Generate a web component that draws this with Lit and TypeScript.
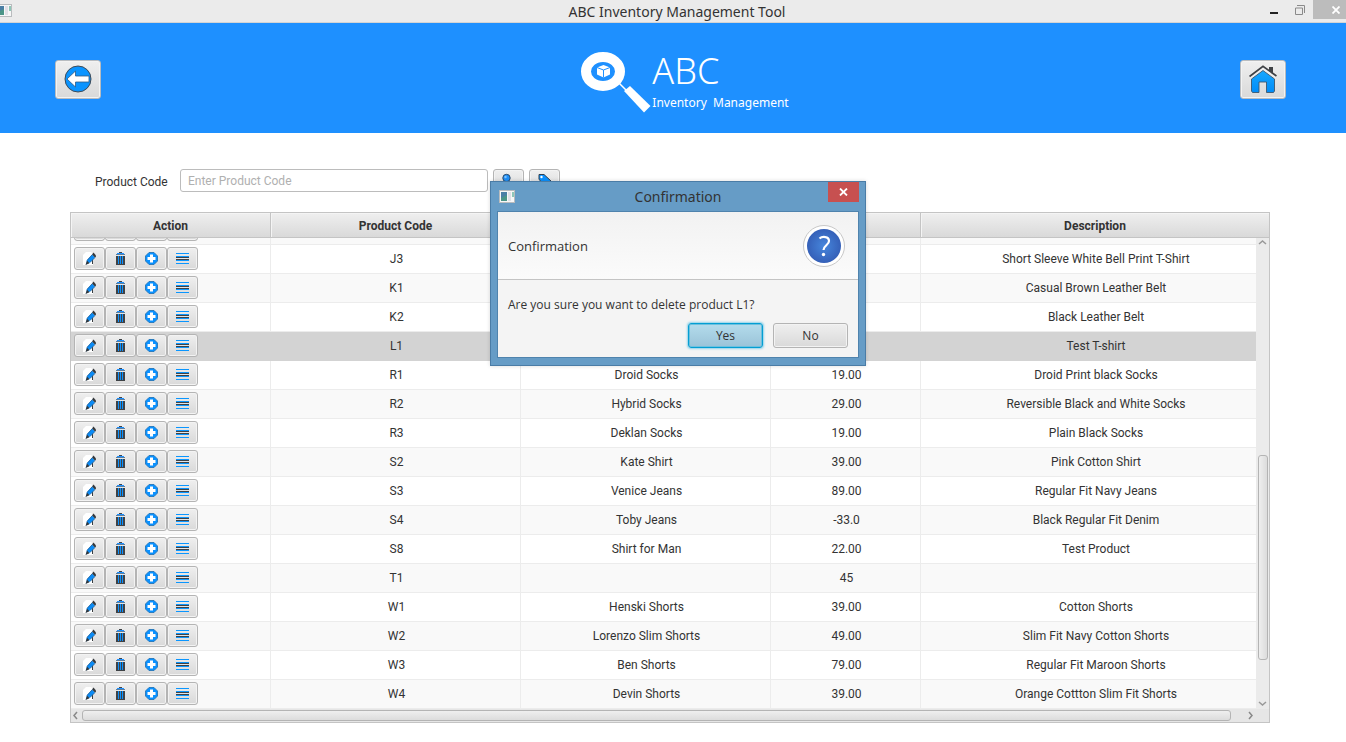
import { LitElement, html, css, svg } from "lit";
import { customElement, state } from "lit/decorators.js";

interface Product {
  code: string;
  name: string;
  price: string;
  description: string;
}

const PRODUCTS: Product[] = [
  { code: "J3", name: "", price: "", description: "Short Sleeve White Bell Print T-Shirt" },
  { code: "K1", name: "", price: "", description: "Casual Brown Leather Belt" },
  { code: "K2", name: "", price: "", description: "Black Leather Belt" },
  { code: "L1", name: "", price: "", description: "Test T-shirt" },
  { code: "R1", name: "Droid Socks", price: "19.00", description: "Droid Print black Socks" },
  { code: "R2", name: "Hybrid Socks", price: "29.00", description: "Reversible Black and White Socks" },
  { code: "R3", name: "Deklan Socks", price: "19.00", description: "Plain Black Socks" },
  { code: "S2", name: "Kate Shirt", price: "39.00", description: "Pink Cotton Shirt" },
  { code: "S3", name: "Venice Jeans", price: "89.00", description: "Regular Fit Navy Jeans" },
  { code: "S4", name: "Toby Jeans", price: "-33.0", description: "Black Regular Fit Denim" },
  { code: "S8", name: "Shirt for Man", price: "22.00", description: "Test Product" },
  { code: "T1", name: "", price: "45", description: "" },
  { code: "W1", name: "Henski Shorts", price: "39.00", description: "Cotton Shorts" },
  { code: "W2", name: "Lorenzo Slim Shorts", price: "49.00", description: "Slim Fit Navy Cotton Shorts" },
  { code: "W3", name: "Ben Shorts", price: "79.00", description: "Regular Fit Maroon Shorts" },
  { code: "W4", name: "Devin Shorts", price: "39.00", description: "Orange Cottton Slim Fit Shorts" },
];

const icon = (w: number, h: number, body: unknown) =>
  html`<svg width=${w} height=${h} viewBox="0 0 ${w} ${h}" aria-hidden="true">${body}</svg>`;

const editIcon = icon(13, 13, svg`
  <path d="M3 0H8L10 2V13H0V3Z" fill="#fff"/>
  <path d="M9.500 7V12" stroke="#3a3d40"/>
  <path d="M3 12.500L4 8L9 2.500L12 5.500L7 10.500Z" fill="#0a8cf8"/>
  <path d="M4 8.500L9 3M7 10.500L12 5.500" stroke="#2c5f8e" stroke-width=".8"/>
  <path d="M9 2.500L10.500 .5L13 3.500V4.500L12 5.500Z" fill="#34383c"/>
  <path d="M2.500 13L4 8.500L6.500 11.300Z" fill="#34383c"/>`);

const trashIcon = icon(9, 13, svg`
  <g shape-rendering="crispEdges">
    <rect x="3" y="0" width="3" height="1" fill="#3f4246"/>
    <rect x="1" y="1" width="7" height="1" fill="#1e90ff"/>
    <rect x="0" y="2" width="9" height="1" fill="#5b7d9c"/>
    <rect x="0" y="4" width="9" height="9" fill="#3f4246"/>
    <path d="M2.500 4V12M4.500 4V12M6.500 4V12" stroke="#0a91ff"/>
  </g>`);

const addIcon = icon(13, 13, svg`
  <path d="M4 .5H9L12.500 4V9L9 12.500H4L.5 9V4Z" fill="#0a91ff" stroke="#2676b8" stroke-width=".9"/>
  <path d="M6.500 2.500V10.500M2.500 6.500H10.500" stroke="#fff" stroke-width="3"/>`);

const listIcon = icon(13, 11, svg`
  <g shape-rendering="crispEdges">
    <path d="M0 .5H13M0 3.500H13M0 7.500H13M0 10.500H13" stroke="#0a96ff"/>
    <path d="M0 4.500H13M0 6.500H13" stroke="#3f4246"/>
  </g>`);

const searchIcon = icon(14, 16, svg`
  <path d="M7 8.500L11 14" stroke="#333" stroke-width="2"/>
  <circle cx="4.500" cy="5" r="3.700" fill="#2090f8" stroke="#2b4a6a"/>
  <circle cx="3.500" cy="4" r="1.200" fill="#7cc4ff"/>`);

const tagIcon = icon(14, 16, svg`
  <path d="M1 1.500H6L13 8L8 13L1 6.500Z" fill="#0a91ff" stroke="#30404f"/>
  <circle cx="3.500" cy="4" r="1.200" fill="#fff"/>`);

const backIcon = icon(28, 28, svg`
  <circle cx="14" cy="14" r="13" fill="#0a94ff" stroke="#3f4b57" stroke-width="1"/>
  <path d="M3 14L11.500 6V11H25V17H11.500V22Z" fill="#fff" stroke="#2d5b85" stroke-width=".8"/>`);

const homeIcon = icon(28, 28, svg`
  <defs><linearGradient id="walls" x1="0" y1="0" x2="0" y2="1"><stop offset="0" stop-color="#18a8ff"/><stop offset="1" stop-color="#008cf8"/></linearGradient></defs>
  <path d="M14 5.500L25.500 14V26L24.500 27.500H17.500V17H10V27.500H3.500L2.500 26V14Z" fill="url(#walls)" stroke="#3c5870" stroke-width=".9"/>
  <path d="M.5 12L14 2L27.500 11.500" fill="none" stroke="#f0f0f0" stroke-width="4"/>
  <path d="M.5 11.500L14 1.300L27.500 11" fill="none" stroke="#3f4246" stroke-width="1.800"/>
  <path d="M20 2H24V8.500L20 5.500Z" fill="#3f4246"/>`);

const logo = html`<svg width="72" height="64" viewBox="0 0 72 64" aria-hidden="true">
  <ellipse cx="23" cy="20.500" rx="17" ry="14.500" fill="none" stroke="#fff" stroke-width="10"/>
  <path d="M39 32L48 41" stroke="#fff" stroke-width="1.500"/>
  <path d="M44 40L50 35L70.500 55L64 61.500Z" fill="#fff"/>
  <path d="M23.500 14L30 16.500V23.500L23.500 26.500L17 23.500V16.500Z" fill="#fff"/>
  <path d="M17 16.500L23.500 19L30 16.500M23.500 19V26.500" fill="none" stroke="#1e90ff" stroke-width="1"/>
</svg>`;

const appIcon = html`<svg class="app-icon" width="16" height="13" viewBox="0 0 16 13" aria-hidden="true">
  <rect x=".5" y=".5" width="15" height="12" fill="#f7f7f7" stroke="#b9bcbe"/>
  <rect x="2" y="2" width="6" height="9" fill="#4b9587"/>
  <path d="M2 2H8V5L2 8Z" fill="#4a7fa5"/>
  <rect x="9" y="2" width="3" height="9" fill="#e0e0e6"/>
  <rect x="13" y="2" width="2" height="5" fill="#8fc7b8"/>
</svg>`;

@customElement("row-actions")
class RowActions extends LitElement {
  static styles = css`
    :host { display: flex; padding-left: 3px; }
    .action {
      box-sizing: border-box;
      display: flex;
      align-items: center;
      justify-content: center;
      width: 31px;
      height: 23px;
      padding: 0;
      border: 1px solid #b4b4b4;
      border-radius: 3px;
      background: linear-gradient(#efefef, #d9d9d9);
      box-shadow: inset 0 0 0 1px #f3f3f3;
    }
  `;
  render() {
    return html`
      <button class="action" aria-label="Edit">${editIcon}</button>
      <button class="action" aria-label="Delete">${trashIcon}</button>
      <button class="action" aria-label="Add">${addIcon}</button>
      <button class="action" aria-label="Details">${listIcon}</button>
    `;
  }
}

@customElement("confirm-dialog")
class ConfirmDialog extends LitElement {
  static styles = css`
    :host {
      box-sizing: border-box;
      display: block;
      width: 376px;
      padding: 0 6px 7px;
      border: 1px solid #4a7ca6;
      background: #669cc6;
      color: #333;
      font-family: "Open Sans", "Noto Sans", sans-serif;
      font-size: 12px;
      box-shadow: 0 0 4px rgba(0, 0, 0, 0.15);
    }
    .bar {
      display: grid;
      grid-template-columns: 31px 1fr 31px;
      height: 29px;
    }
    .app-icon { margin: 8px 0 0 2px; }
    .title {
      margin: 0;
      font-family: "Noto Sans", sans-serif;
      font-size: 14px;
      font-weight: 400;
      line-height: 29px;
      text-align: center;
    }
    .close {
      display: flex;
      align-items: center;
      justify-content: center;
      height: 20px;
      padding: 0;
      border: 0;
      background: #c75050;
    }
    .pane { border: 1px solid #4f83ad; background: #f4f4f4; }
    .head {
      display: flex;
      align-items: center;
      justify-content: space-between;
      height: 67px;
      padding: 0 12px 0 10px;
      border-bottom: 1px solid #c4c4c4;
      background: linear-gradient(#f2f2f2, #fbfbfb);
      font-size: 13px;
    }
    .message { margin: 0; padding: 16px 10px 0; line-height: 18px; }
    .buttons {
      display: flex;
      justify-content: flex-end;
      gap: 10px;
      padding: 9px 10px;
    }
    .choice {
      box-sizing: border-box;
      width: 75px;
      height: 25px;
      padding: 0;
      border: 1px solid #b4b4b4;
      border-radius: 3px;
      background: linear-gradient(#efefef, #d9d9d9);
      box-shadow: inset 0 0 0 1px #f3f3f3;
      color: #333;
      font: inherit;
    }
    .default {
      border-color: #039ed3;
      background: linear-gradient(#b4dcec, #9ac3d8);
      box-shadow: inset 0 0 0 1px #6cc0de, 0 0 2px 1px #8fd2ea;
    }
  `;
  render() {
    return html`
      <div class="bar">
        ${appIcon}
        <h2 class="title">Confirmation</h2>
        <button class="close" aria-label="Close" @click=${this.dismiss}>
          <svg width="9" height="8" viewBox="0 0 9 8"><path d="M1 .5L8 7.500M8 .5L1 7.500" stroke="#fff" stroke-width="1.800"/></svg>
        </button>
      </div>
      <div class="pane">
        <div class="head">
          <span>Confirmation</span>
          <svg width="44" height="44" viewBox="0 0 44 44" aria-hidden="true">
            <defs><radialGradient id="disc"><stop offset="0" stop-color="#4686dc"/><stop offset="1" stop-color="#3560b8"/></radialGradient></defs>
            <circle cx="22" cy="22" r="20.500" fill="#fff" stroke="#c8c8c8"/>
            <circle cx="22" cy="22" r="17" fill="url(#disc)"/>
            <path d="M17.500 14.500C20 12.300 27 12 27 17C27 21 22 21 21.500 26" fill="none" stroke="#fff" stroke-width="2.200"/>
            <circle cx="21.500" cy="30.500" r="1.700" fill="#fff"/>
          </svg>
        </div>
        <p class="message">Are you sure you want to delete product L1?</p>
        <div class="buttons">
          <button class="choice default" @click=${this.dismiss}>Yes</button>
          <button class="choice" @click=${this.dismiss}>No</button>
        </div>
      </div>
    `;
  }
  private dismiss() {
    this.dispatchEvent(new Event("dismiss"));
  }
}

@customElement("app-root")
class AppRoot extends LitElement {
  @state() private confirming = true;

  static styles = css`
    :host {
      display: block;
      position: relative;
      min-height: 100vh;
      background: #fff;
      color: #333;
      font-family: Roboto, sans-serif;
      font-size: 12px;
    }
    .titlebar {
      display: grid;
      grid-template-columns: 93px 1fr 85px;
      height: 22px;
      border-bottom: 1px solid #d4d4d4;
      background: #ebebeb;
      overflow: hidden;
    }
    .titlebar .app-icon { margin: 4px 0 0 -4px; }
    .window-title {
      margin: 0;
      font-family: "Noto Sans", "Open Sans", sans-serif;
      font-size: 14px;
      font-weight: 400;
      line-height: 23px;
      text-align: center;
    }
    .window-buttons { display: flex; justify-content: flex-end; }
    .window-button {
      display: flex;
      align-items: center;
      justify-content: center;
      width: 26px;
      height: 19px;
      padding: 0;
      border: 0;
      background: none;
    }
    .window-close { width: 33px; padding-left: 12px; background: #bcbcbc; }
    .banner {
      display: flex;
      align-items: center;
      justify-content: space-between;
      height: 110px;
      padding: 2px 60px 0 55px;
      box-sizing: border-box;
      background: #1e90ff;
      color: #fff;
    }
    .nav {
      box-sizing: border-box;
      display: flex;
      align-items: center;
      justify-content: center;
      width: 46px;
      height: 39px;
      padding: 0;
      border: 1px solid #b8bcc0;
      border-radius: 3px;
      background: linear-gradient(#efefef, #d9d9d9);
      box-shadow: inset 0 0 0 1px #f3f3f3;
    }
    .brand {
      display: flex;
      align-items: center;
      padding: 8px 0 0 28px;
      font-family: "Noto Sans", "Open Sans", sans-serif;
    }
    .brand-name { display: block; font-size: 36px; font-weight: 300; line-height: 40px; }
    .brand-sub { display: block; font-size: 12px; line-height: 24px; }
    .content { padding: 36px 76px 19px 70px; }
    .search {
      display: flex;
      align-items: flex-start;
      gap: 5px;
      height: 24px;
      margin-bottom: 19px;
      padding-left: 25px;
    }
    .search-label { width: 80px; line-height: 26px; }
    .code-input {
      box-sizing: border-box;
      width: 308px;
      height: 23px;
      padding: 0 7px;
      border: 1px solid #bcbcbc;
      border-radius: 3px;
      background: #fff;
      color: #333;
      font: inherit;
    }
    .code-input::placeholder { color: #b0b0b0; opacity: 1; }
    .tool {
      box-sizing: border-box;
      display: flex;
      align-items: center;
      justify-content: center;
      width: 31px;
      height: 24px;
      padding: 0;
      border: 1px solid #b4b4b4;
      border-radius: 3px;
      background: linear-gradient(#efefef, #d9d9d9);
      box-shadow: inset 0 0 0 1px #f3f3f3;
    }
    .grid {
      display: grid;
      grid-template-columns: 1fr 13px;
      grid-template-rows: 25px 1fr 13px;
      border: 1px solid #c4c4c4;
      overflow: hidden;
    }
    .products {
      grid-area: 1 / 1 / 3 / 3;
      width: 100%;
      border-collapse: separate;
      border-spacing: 0;
      table-layout: fixed;
    }
    .col-action { width: 200px; }
    .col-text { width: 250px; }
    .col-price { width: 150px; }
    th {
      height: 22px;
      padding: 2px 0 0;
      border-right: 1px solid #c4c4c4;
      border-bottom: 1px solid #c4c4c4;
      background: linear-gradient(#efefef, #d9d9d9);
      box-shadow: inset 1px 1px 0 #f4f4f4;
      font-weight: 700;
    }
    td {
      height: 28px;
      padding: 0 0 0 2px;
      border-right: 1px solid #ececec;
      border-bottom: 1px solid #ececec;
      text-align: center;
    }
    td:first-child { height: 26px; padding: 2px 0 0; vertical-align: top; }
    th:last-child, td:last-child { border-right: 0; }
    tr:nth-child(odd) td { background: #f9f9f9; }
    tr:nth-child(even) td { background: #fff; }
    tr.selected td { background: #d3d3d3; border-color: #d3d3d3; }
    .scrolled td, .scrolled td:first-child { height: 6px; padding: 0; }
    .clip { display: flex; align-items: flex-end; height: 6px; overflow: hidden; }
    .clip row-actions { padding-bottom: 3px; }
    .vbar {
      grid-area: 2 / 2;
      display: flex;
      flex-direction: column;
      align-items: center;
      background: #ebebeb;
    }
    .hbar {
      grid-area: 3 / 1 / 4 / 3;
      display: flex;
      align-items: center;
      padding-right: 13px;
      background: #e6e6e6;
    }
    .arrow { flex: none; }
    .thumb {
      box-sizing: border-box;
      border: 1px solid #b4b4b4;
      border-radius: 3px;
      background: linear-gradient(90deg, #efefef, #dcdcdc);
    }
    .vtrack { display: flex; flex: 1; flex-direction: column; align-self: stretch; padding: 0 1px 0 2px; }
    .vspace { flex: 207; }
    .vthumb { flex: 204; }
    .vrest { flex: 38; }
    .htrack { display: flex; flex: 1; }
    .hthumb { flex: 1149; height: 11px; background: linear-gradient(#efefef, #dcdcdc); }
    .hrest { flex: 14; }
    .confirm { position: absolute; top: 181px; left: calc(50% - 183px); }
  `;

  render() {
    return html`
      <header>
        <div class="titlebar">
          ${appIcon}
          <h1 class="window-title">ABC Inventory Management Tool</h1>
          <div class="window-buttons">
            <button class="window-button" aria-label="Minimize">
              <svg width="8" height="12" viewBox="0 0 8 12"><path d="M0 9H8" stroke="#222" stroke-width="2"/></svg>
            </button>
            <button class="window-button" aria-label="Restore">
              <svg width="10" height="10" viewBox="0 0 10 10" fill="none" stroke="#8a8a8a"><path d="M2 .5H9.500V8"/><path d="M.5 3H7.500V9.500H.5Z"/></svg>
            </button>
            <button class="window-button window-close" aria-label="Close">
              <svg width="8" height="8" viewBox="0 0 8 8"><path d="M.5 .5L7.500 7.500M7.500 .5L.5 7.500" stroke="#fff" stroke-width="1.800"/></svg>
            </button>
          </div>
        </div>
        <div class="banner">
          <button class="nav" aria-label="Back">${backIcon}</button>
          <div class="brand">
            ${logo}
            <div>
              <span class="brand-name">ABC</span>
              <span class="brand-sub">Inventory&nbsp; Management</span>
            </div>
          </div>
          <button class="nav" aria-label="Home">${homeIcon}</button>
        </div>
      </header>
      <main class="content">
        <form class="search" @submit=${(e: Event) => e.preventDefault()}>
          <label class="search-label" for="code">Product Code</label>
          <input class="code-input" id="code" placeholder="Enter Product Code" />
          <button class="tool" aria-label="Search">${searchIcon}</button>
          <button class="tool" aria-label="Tags">${tagIcon}</button>
        </form>
        <div class="grid">
          <table class="products">
            <colgroup>
              <col class="col-action" /><col class="col-text" /><col class="col-text" /><col class="col-price" /><col />
            </colgroup>
            <thead>
              <tr><th>Action</th><th>Product Code</th><th aria-label="Name"></th><th aria-label="Price"></th><th>Description</th></tr>
            </thead>
            <tbody>
              <tr class="scrolled"><td><div class="clip"><row-actions></row-actions></div></td><td></td><td></td><td></td><td></td></tr>
              ${PRODUCTS.map((p) => html`
                <tr class=${p.code === "L1" ? "selected" : ""}>
                  <td><row-actions></row-actions></td>
                  <td>${p.code}</td>
                  <td>${p.name}</td>
                  <td>${p.price}</td>
                  <td>${p.description}</td>
                </tr>`)}
            </tbody>
          </table>
          <div class="vbar">
            <svg class="arrow" width="9" height="11" viewBox="0 0 9 11"><path d="M1 6L4.500 3L8 6" fill="none" stroke="#999" stroke-width="1.500"/></svg>
            <div class="vtrack"><div class="vspace"></div><div class="thumb vthumb"></div><div class="vrest"></div></div>
            <svg class="arrow" width="9" height="11" viewBox="0 0 9 11"><path d="M1 4L4.500 7L8 4" fill="none" stroke="#999" stroke-width="1.500"/></svg>
          </div>
          <div class="hbar">
            <svg class="arrow" width="11" height="9" viewBox="0 0 11 9"><path d="M6 1L3 4.500L6 8" fill="none" stroke="#888" stroke-width="1.500"/></svg>
            <div class="htrack"><div class="thumb hthumb"></div><div class="hrest"></div></div>
            <svg class="arrow" width="11" height="9" viewBox="0 0 11 9"><path d="M4 1L7 4.500L4 8" fill="none" stroke="#888" stroke-width="1.500"/></svg>
          </div>
        </div>
      </main>
      ${this.confirming
        ? html`<confirm-dialog class="confirm" role="dialog" aria-label="Confirmation" @dismiss=${() => (this.confirming = false)}></confirm-dialog>`
        : ""}
    `;
  }
}
